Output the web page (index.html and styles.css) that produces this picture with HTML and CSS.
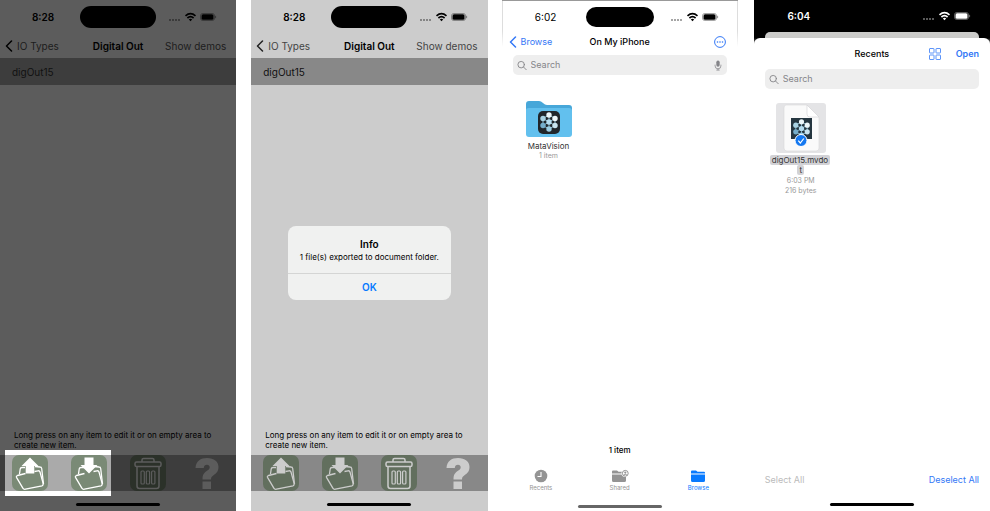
FILE: index.html
```html
<!DOCTYPE html>
<html lang="en">
<head>
<meta charset="utf-8">
<meta name="viewport" content="width=device-width, initial-scale=1">
<title>Digital Out export</title>
<link rel="stylesheet" href="styles.css">
</head>
<body>
<svg class="defs" aria-hidden="true">
  <symbol id="signal" viewBox="0 0 48 12">
    <g fill="currentColor" opacity=".35"><rect y="8" width="2" height="2"/><rect x="3" y="8" width="2" height="2"/><rect x="6" y="8" width="2" height="2"/><rect x="9" y="8" width="2" height="2"/></g>
    <g fill="none" stroke="currentColor" stroke-width="1.7"><path d="M16.5 4.8q5-4.2 10 0M18.4 7q3.1-2.6 6.2 0"/></g>
    <path d="M19.8 8.4q1.7-1.3 3.4 0L21.5 10.3z" fill="currentColor"/>
    <rect x="31.5" y="2.5" width="14" height="7" rx="2.2" fill="none" stroke="currentColor" opacity=".35"/>
    <rect x="32.5" y="3.3" width="12" height="5.4" rx="1.5" fill="currentColor"/>
    <path d="M46.6 4.8v2.4" stroke="currentColor" opacity=".4"/>
  </symbol>
  <symbol id="back" viewBox="0 0 8 12"><path d="M6.5 1 1.5 6l5 5" fill="none" stroke="currentColor" stroke-width="1.5" stroke-linecap="round" stroke-linejoin="round"/></symbol>
  <symbol id="cards" viewBox="0 0 36 36">
    <g fill="none" stroke="currentColor" stroke-width="1.3" stroke-linejoin="round"><path d="M13 12.500H10q-1.500 0-1.800 1.500L7.500 19M23 11.500l5 .5q1.500 0 1.700 1.500L31.500 29"/><path d="M13.500 18.500l-8 2q-1.500.5-1 1.800l6.500 11q.7 1.300 2.500.9l16.500-3.400q1.500-.5 1.200-2.100L28 17q-.5-1.500-2-1.200l-3.500.7"/></g>
  </symbol>
  <symbol id="export" viewBox="0 0 36 36"><use href="#cards"/><path d="M18 2.500 26.500 11H22.300v7.500h-8.600V11H9.500z" fill="currentColor"/></symbol>
  <symbol id="import" viewBox="0 0 36 36"><use href="#cards"/><path d="M13.500 2.500h9V10H26.500l-8.500 8.500L9.500 10h4z" fill="currentColor"/></symbol>
  <symbol id="trash" viewBox="0 0 36 36">
    <g fill="none" stroke="currentColor" stroke-width="1.500" stroke-linejoin="round"><rect x="5" y="7" width="26" height="4.500" rx="1.500"/><path d="M12 7V5q0-1.500 1.500-1.500h9Q24 3.500 24 5v2M7 11.500V31q0 2.500 2.500 2.500h17Q29 33.500 29 31V11.500"/></g>
    <g fill="none" stroke="currentColor" stroke-width="1.200"><rect x="11" y="16" width="3.300" height="13" rx="1"/><rect x="16.300" y="16" width="3.300" height="13" rx="1"/><rect x="21.600" y="16" width="3.300" height="13" rx="1"/></g>
  </symbol>
  <symbol id="help" viewBox="0 0 36 36"><path d="M6.500 13C7 6 11.500 3 18 3c7 0 11.500 3.500 11.500 9 0 4.500-2.500 6.500-5 8.300-1.800 1.300-2.500 2-2.500 4.200h-8.500c0-5 1.500-6.500 4.500-8.700 1.800-1.300 2.700-2.100 2.700-3.600 0-1.600-1-2.500-2.700-2.500-2 0-3 1.100-3.200 3.300zM13.500 26.500H22V34h-8.500z" fill="currentColor"/></symbol>
  <symbol id="search" viewBox="0 0 12 12"><g fill="none" stroke="currentColor" stroke-width="1.100" stroke-linecap="round"><circle cx="5" cy="5" r="3.900"/><path d="m7.900 7.900 3.200 3.200"/></g></symbol>
  <symbol id="folder" viewBox="0 0 16 13"><path d="M1 4V2Q1 1 2 1h4l1.500 1.300H14q1 0 1 1V4zM1 5h14v6q0 1.500-1.500 1.500h-11Q1 12.500 1 11z" fill="currentColor"/></symbol>
  <symbol id="molecule" viewBox="0 0 22 22">
    <path d="M11 4 5 7.500v7l6 3.500 6-3.500v-7zM5 7.500l6 3.500 6-3.500M11 11v7M5 14.500l6-3.500 6 3.500M11 4v7" fill="none" stroke="#83b5c8" stroke-width="1"/>
    <g fill="#edf7fa"><circle cx="11" cy="4" r="2.700"/><circle cx="17" cy="7.500" r="2.700"/><circle cx="17" cy="14.500" r="2.700" fill="#c8e4ef"/><circle cx="11" cy="11" r="2.700" fill="#b5dcef"/></g>
    <g fill="#75adca"><circle cx="5" cy="7.500" r="2.700" fill="#a8d2e3"/><circle cx="5" cy="14.500" r="2.700"/><circle cx="11" cy="18" r="2.700" fill="#9bcde3"/></g>
  </symbol>
</svg>

<main class="board">
  <section class="phone app dimmed">
    <header class="status"><span class="time">8:28</span><span class="island"></span><svg class="signal"><use href="#signal"/></svg></header>
    <nav class="nav"><button class="back"><svg><use href="#back"/></svg>IO Types</button><h2>Digital Out</h2><button class="end">Show demos</button></nav>
    <button class="row">digOut15</button>
    <p class="note">Long press on any item to edit it or on empty area to create new item.</p>
    <div class="toolbar lit">
      <button aria-label="Export"><svg class="tile"><use href="#export"/></svg></button>
      <button aria-label="Import"><svg class="tile"><use href="#import"/></svg></button>
      <button aria-label="Delete"><svg class="tile"><use href="#trash"/></svg></button>
      <button aria-label="Help"><svg><use href="#help"/></svg></button>
    </div>
    <div class="home"></div>
  </section>

  <section class="phone app">
    <header class="status"><span class="time">8:28</span><span class="island"></span><svg class="signal"><use href="#signal"/></svg></header>
    <nav class="nav"><button class="back"><svg><use href="#back"/></svg>IO Types</button><h2>Digital Out</h2><button class="end">Show demos</button></nav>
    <button class="row">digOut15</button>
    <p class="note">Long press on any item to edit it or on empty area to create new item.</p>
    <div class="toolbar">
      <button aria-label="Export"><svg class="tile"><use href="#export"/></svg></button>
      <button aria-label="Import"><svg class="tile"><use href="#import"/></svg></button>
      <button aria-label="Delete"><svg class="tile"><use href="#trash"/></svg></button>
      <button aria-label="Help"><svg><use href="#help"/></svg></button>
    </div>
    <div class="home"></div>
    <div class="alert" role="alertdialog" aria-labelledby="alert-title">
      <div class="message"><h3 id="alert-title">Info</h3><p>1 file(s) exported to document folder.</p></div>
      <button>OK</button>
    </div>
  </section>

  <section class="phone files">
    <header class="status"><span class="time">6:02</span><span class="island"></span><svg class="signal"><use href="#signal"/></svg></header>
    <nav class="nav"><button class="back"><svg><use href="#back"/></svg>Browse</button><h2>On My iPhone</h2>
      <button class="end" aria-label="More"><svg class="more" viewBox="0 0 12 12"><circle cx="6" cy="6" r="5.400" fill="none" stroke="currentColor"/><g fill="currentColor"><circle cx="3.500" cy="6" r=".8"/><circle cx="6" cy="6" r=".8"/><circle cx="8.500" cy="6" r=".8"/></g></svg></button></nav>
    <label class="search"><svg><use href="#search"/></svg><input type="search" placeholder="Search" aria-label="Search">
      <svg viewBox="0 0 12 12"><rect x="4" y="0" width="4" height="7.500" rx="2" fill="currentColor"/><path d="M2.500 5v1.500a3.500 3.500 0 0 0 7 0V5M6 9.800v1.700M4 11.500h4" fill="none" stroke="currentColor" stroke-width=".9"/></svg></label>
    <button class="item">
      <svg class="big-folder" viewBox="0 0 46 38"><path d="M0 10V4q0-3 3-3h10q2 0 4 2t4 2h22q3 0 3 3v5H0z" fill="#47a7d9"/><path d="M0 10q0-2 3-2h40q3 0 3 3v23q0 3-3 3H3q-3 0-3-3z" fill="#62c0ee"/><rect x="12" y="11" width="22" height="23" rx="5" fill="#20262b"/><use href="#molecule" x="12" y="11" width="22" height="22"/></svg>
      <span class="name">MataVision</span><span class="meta">1 item</span>
    </button>
    <p class="count">1 item</p>
    <nav class="tabs">
      <button><svg viewBox="0 0 18 14"><circle cx="9" cy="7" r="6.300" fill="currentColor"/><path d="M9 3v4.500H5.500" fill="none" stroke="#fff" stroke-width="1.100"/></svg>Recents</button>
      <button><svg viewBox="0 0 18 14"><use href="#folder" x="0" y="0" width="16" height="14"/><circle cx="14.300" cy="4.300" r="3.800" fill="#fff"/><circle cx="14.300" cy="4.300" r="2.900" fill="none" stroke="currentColor"/><circle cx="14.300" cy="3.600" r="1.100" fill="currentColor"/><path d="M12.500 6.200q1.800-1.700 3.600 0" fill="none" stroke="currentColor"/></svg>Shared</button>
      <button class="active"><svg viewBox="0 0 18 14"><use href="#folder" x="1" y="0" width="16" height="14"/></svg>Browse</button>
    </nav>
    <div class="home"></div>
  </section>

  <section class="phone picker">
    <header class="status"><span class="time">6:04</span><span class="island"></span><svg class="signal"><use href="#signal"/></svg></header>
    <div class="peek"></div>
    <div class="sheet">
      <nav class="nav"><h2>Recents</h2><div class="end"><button aria-label="Grid view"><svg class="grid-icon" viewBox="0 0 12 12"><g fill="none" stroke="currentColor" stroke-width=".8"><rect x=".5" y=".5" width="4.500" height="4.500" rx=".5"/><rect x="7" y=".5" width="4.500" height="4.500" rx=".5"/><rect x=".5" y="7" width="4.500" height="4.500" rx=".5"/><rect x="7" y="7" width="4.500" height="4.500" rx=".5"/></g></svg></button><button class="open">Open</button></div></nav>
      <label class="search"><svg><use href="#search"/></svg><input type="search" placeholder="Search" aria-label="Search"></label>
      <button class="item">
        <svg class="thumb" viewBox="0 0 50 50"><rect width="50" height="50" rx="3" fill="#e4e4e6"/><path d="M10 2h21l12 12v31q0 3-3 3H11q-3 0-3-3V5q0-3 2-3z" fill="#fafafa" stroke="#d8d8da" stroke-width=".6"/><path d="M31 2v9q0 3 3 3h9z" fill="#fff" stroke="#d0d0d3" stroke-width=".6"/><rect x="15" y="15" width="21" height="21" fill="#253640"/><use href="#molecule" x="15" y="15" width="21" height="21"/><circle cx="25" cy="37.500" r="6" fill="#1478f0" stroke="#fff"/><path d="m22.300 37.700 2 2.300 3.500-4.500" fill="none" stroke="#fff" stroke-width="1.200"/></svg>
        <span class="name"><mark>digOut15.mvdot</mark></span><span class="meta">6:03 PM</span><span class="meta">216 bytes</span>
      </button>
      <div class="actions"><button disabled>Select All</button><button>Deselect All</button></div>
      <div class="home"></div>
    </div>
  </section>
</main>
</body>
</html>
```
FILE: styles.css
```css
* { box-sizing: border-box; }
body { margin: 0; background: #fff; font: 10px/12px Inter, "Liberation Sans", sans-serif; }
h2, h3, p { margin: 0; font-size: inherit; }
button { padding: 0; border: 0; background: none; color: inherit; font: inherit; }
svg { display: block; flex: none; }
.defs { position: absolute; width: 0; height: 0; }

.board { display: grid; grid-template-columns: repeat(4, 1fr); gap: 15px; min-height: 100vh; }
.phone { position: relative; display: flex; flex-direction: column; min-width: 0; color: #000; }

.status { display: grid; grid-template-columns: 1fr 76px 1fr; align-items: center; height: 34px; }
.time { justify-self: center; padding-left: 6px; font-weight: 600; }
.island { height: 22px; border-radius: 11px; background: #000; }
.signal { width: 48px; height: 12px; margin-left: 13px; }

.nav { display: grid; grid-template-columns: 1fr auto 1fr; align-items: center; height: 24px; padding: 0 10px; }
.nav h2 { grid-column: 2; color: #000; font-weight: 600; }
.back { display: flex; align-items: center; gap: 4px; justify-self: start; margin-left: -5px; }
.back svg { width: 8px; height: 12px; }
.end { justify-self: end; }

.app { --page: #ccc; --bar: #888; --tile: #626f5e; --ink: #ccc; --text: #444; background: var(--page); }
.app.dimmed { --page: #5c5c5c; --bar: #3d3d3d; --tile: #2b3129; --ink: #5c5c5c; --text: #1c1c1c; }
.app .nav { height: 23px; }
.app .nav button { color: var(--text); }
.app .back svg { color: #222; }
.app.dimmed .back svg { color: #000; }
.row { height: 27px; margin-top: 1px; padding: 0 12px; background: var(--bar); color: #111; text-align: left; }
.note { margin-top: auto; padding: 0 14px 5px; font-size: 8px; line-height: 10px; }
.toolbar { position: relative; display: grid; grid-template-columns: repeat(4, 1fr); justify-items: center; height: 36px; background: var(--bar); color: var(--ink); }
.toolbar svg { position: relative; width: 36px; height: 36px; border-radius: 7px; }
.tile { background: var(--tile); }
.lit::before { content: ""; position: absolute; inset: -5px auto -5px 5px; width: 106px; background: linear-gradient(#fff 5px, #aaa 5px 41px, #fff 41px); }
.lit button:nth-child(-n + 2) { --tile: #7a8a76; color: #fff; }

.home { display: flex; flex: none; height: 20px; padding-top: 12px; justify-content: center; }
.home::after { content: ""; width: 84px; height: 3px; border-radius: 2px; background: #000; }

.alert { position: absolute; top: 226px; left: 37px; right: 37px; border-radius: 8px; background: #f0f1f0; text-align: center; }
.message { padding: 12px 4px 9px; border-bottom: 1px solid #d4d5d4; }
.alert h3 { font-weight: 600; }
.alert p { font-size: 8px; line-height: 14px; }
.alert button { width: 100%; height: 26px; color: #087aff; font-weight: 600; }

.files { margin: 0 1px 0 -1px; border-top: 1px solid #999; }
.files::before, .files::after { content: ""; position: absolute; top: 0; width: 1px; height: 46px; background: linear-gradient(#ddd 30px, #fff); }
.files::before { left: 0; }
.files::after { right: 0; }
.files .status { grid-template-columns: 1fr 68px 1fr; height: 31px; }
.files .time { padding-left: 4px; font-weight: 400; }
.files .island { height: 20px; }
.files .signal { margin-left: 17px; }
.files .nav { height: 20px; padding: 0 12px; color: #3478f6; }
.files .nav h2, .picker .nav h2 { font-weight: 500; font-size: 9px; }
.files .back { font-size: 9px; }
.more { width: 12px; height: 12px; }
.search { display: flex; align-items: center; gap: 4px; height: 20px; margin: 3px 11px 0; padding: 0 4px; border-radius: 5px; background: #eee; color: #858589; }
.search svg { width: 10px; height: 11px; }
.search input { flex: 1; min-width: 0; padding: 0; border: 0; outline: 0; background: none; color: #000; font: inherit; font-size: 9px; }
.search input::placeholder { color: #858589; opacity: 1; }

.item { display: flex; flex-direction: column; align-items: center; width: 72px; margin: 25px 0 0 11px; line-height: 10px; }
.item .name { max-width: 64px; margin-top: 3px; color: #333; font-size: 8px; overflow-wrap: anywhere; }
.item .meta { color: #999; font-size: 7px; }
.big-folder { width: 46px; height: 38px; }
.count { margin-top: auto; padding-bottom: 13px; font-size: 8px; font-weight: 500; text-align: center; }
.tabs { display: grid; grid-template-columns: repeat(3, 1fr); color: #949494; }
.tabs button { display: flex; flex-direction: column; align-items: center; height: 24px; font-size: 6px; line-height: 10px; }
.tabs svg { width: 18px; height: 14px; }
.tabs .active { color: #087aff; }
.files .home { height: 18px; }
.files .home::after { background: #666; }

.picker { background: linear-gradient(#000 38px, #fff 48px); }
.picker .status { height: 32px; color: #fff; }
.picker .time { padding-left: 10px; }
.peek { height: 6px; margin: 0 11px; border-radius: 5px 5px 0 0; background: #ccccca; }
.sheet { display: flex; flex: 1; flex-direction: column; border-radius: 6px 6px 0 0; background: #fff; }
.picker .nav { height: 31px; padding: 0 11px; }
.picker .search { margin-top: 0; }
.picker .end { display: flex; align-items: center; gap: 15px; color: #3478f6; }
.grid-icon { width: 12px; height: 12px; }
.open { font-size: 9px; font-weight: 600; }
.picker .item { margin-top: 14px; }
.thumb { width: 50px; height: 50px; }
.picker .name { max-width: 62px; margin-top: 2px; }
.picker mark { padding: 0 2px; border-radius: 2px; background: #d2d2d6; color: #333; -webkit-box-decoration-break: clone; box-decoration-break: clone; }
.picker .name + .meta { margin-top: 1px; }
.actions { display: flex; justify-content: space-between; margin-top: auto; padding: 0 11px 5px; color: #3478f6; font-size: 9px; }
.actions button:disabled { color: #bbb; }
```
